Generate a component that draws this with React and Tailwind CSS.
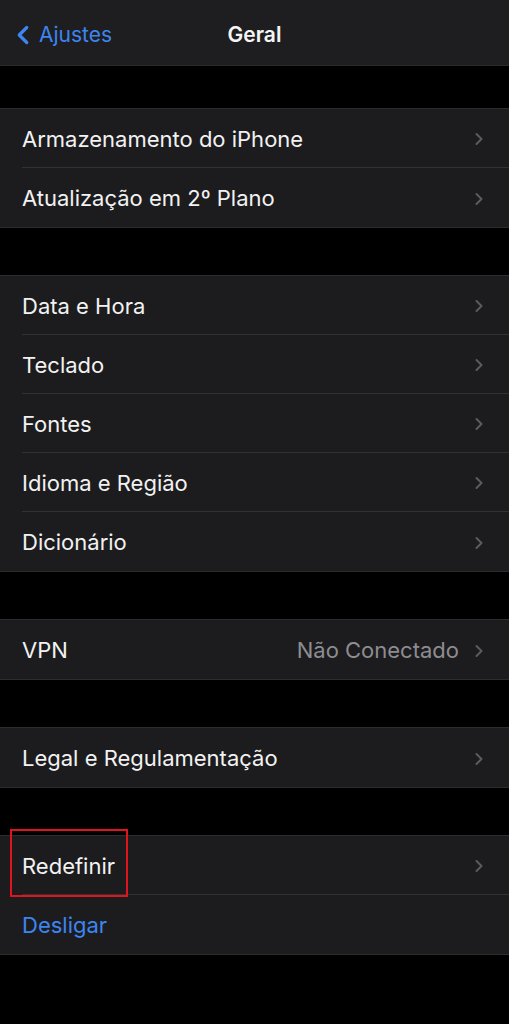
import { ChevronRight, ChevronLeft } from "lucide-react";

const grupos = [
  [{ titulo: "Armazenamento do iPhone" }, { titulo: "Atualização em 2º Plano" }],
  [
    { titulo: "Data e Hora" },
    { titulo: "Teclado" },
    { titulo: "Fontes" },
    { titulo: "Idioma e Região" },
    { titulo: "Dicionário" },
  ],
  [{ titulo: "VPN", valor: "Não Conectado" }],
  [{ titulo: "Legal e Regulamentação" }],
];

function Fila({ titulo, valor, ultima, destacada }) {
  return (
    <div className="relative flex h-[59px] items-center pl-[22px]">
      {destacada && (
        <div className="absolute left-[10px] top-[-7px] h-[68px] w-[118px] border-2 border-[#e0141c]" />
      )}
      <div
        className={
          "flex h-full flex-1 items-center pr-[20px] pt-[2px] " +
          (ultima ? "" : "border-b border-[#323235]")
        }
      >
        <span className="flex-1 text-[22px] text-[#f2f2f2]">{titulo}</span>
        {valor && (
          <span className="mr-[10px] text-[22px] text-[#8d8d92]">{valor}</span>
        )}
        <ChevronRight size={20} strokeWidth={2.4} className="text-[#5b5b60]" />
      </div>
    </div>
  );
}

function Grupo({ children }) {
  return (
    <div className="border-y border-[#2c2c2e] bg-[#1c1c1e]">{children}</div>
  );
}

export default function App() {
  return (
    <div
      className="min-h-[1024px] w-[509px] bg-black"
      style={{ fontFamily: "Inter, 'Liberation Sans', Arial, sans-serif" }}
    >
      <header className="relative flex h-[66px] items-center border-b border-[#2a2a2c] bg-[#1e1e20] pt-[4px]">
        <div className="flex items-center pl-[8px] text-[#3d85f0]">
          <ChevronLeft size={30} strokeWidth={2.6} />
          <span className="ml-[1px] text-[21px]">Ajustes</span>
        </div>
        <h1 className="absolute left-0 right-0 text-center text-[21px] font-semibold text-[#f5f5f5] pointer-events-none">
          Geral
        </h1>
      </header>

      <div className="flex flex-col gap-[47px] pt-[42px]">
        {grupos.map((filas, i) => (
          <Grupo key={i}>
            {filas.map((f, j) => (
              <Fila key={f.titulo} {...f} ultima={j === filas.length - 1} />
            ))}
          </Grupo>
        ))}

        <Grupo>
          <Fila titulo="Redefinir" destacada />
          <div className="flex h-[59px] items-center pl-[22px] pt-[2px]">
            <span className="text-[22px] text-[#3d85f0]">Desligar</span>
          </div>
        </Grupo>
      </div>
    </div>
  );
}
